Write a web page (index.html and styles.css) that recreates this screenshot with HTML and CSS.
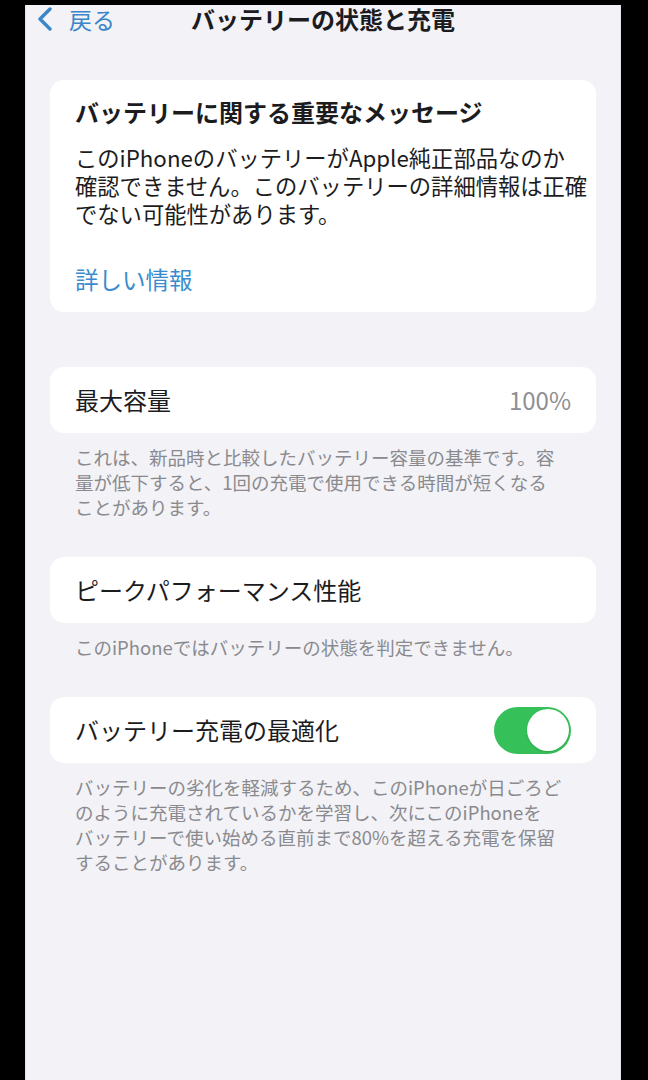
FILE: index.html
```html
<!DOCTYPE html>
<html lang="ja">
<head>
<meta charset="utf-8">
<title>バッテリーの状態と充電</title>
<link rel="stylesheet" href="styles.css">
</head>
<body>
<div class="screen">
  <header class="nav">
    <a class="back">
      <svg class="chev" width="14" height="24" viewBox="0 0 14 24"><polyline points="12,2 2,12 12,22" fill="none" stroke="#3a86c8" stroke-width="3.4" stroke-linecap="round" stroke-linejoin="round"/></svg>
      <span>戻る</span>
    </a>
    <h1 class="nav-title">バッテリーの状態と充電</h1>
    <span></span>
  </header>

  <main class="content">
    <section class="card notice">
      <h2 class="notice-title">バッテリーに関する重要なメッセージ</h2>
      <p class="notice-body"><span class="ln">このiPhoneのバッテリーがApple純正部品なのか</span><span class="ln">確認できません。このバッテリーの詳細情報は正確</span><span class="ln">でない可能性があります。</span></p>
      <a class="notice-link">詳しい情報</a>
    </section>

    <section class="card row first-row">
      <span class="label">最大容量</span>
      <span class="value">100%</span>
    </section>
    <p class="footer">これは、新品時と比較したバッテリー容量の基準です。容<br>量が低下すると、1回の充電で使用できる時間が短くなる<br>ことがあります。</p>

    <section class="card row">
      <span class="label">ピークパフォーマンス性能</span>
    </section>
    <p class="footer">このiPhoneではバッテリーの状態を判定できません。</p>

    <section class="card row">
      <span class="label">バッテリー充電の最適化</span>
      <span class="toggle"><span class="knob"></span></span>
    </section>
    <p class="footer">バッテリーの劣化を軽減するため、このiPhoneが日ごろど<br>のように充電されているかを学習し、次にこのiPhoneを<br>バッテリーで使い始める直前まで80%を超える充電を保留<br>することがあります。</p>
  </main>
</div>
</body>
</html>
```

FILE: styles.css
```css
html, body {
  margin: 0;
  padding: 0;
  background: #000;
}

body {
  font-family: "Noto Sans CJK JP", "Noto Sans", "Liberation Sans", sans-serif;
  color: #1c1c1e;
}

.screen {
  margin: 5px 0 0 25px;
  width: 596px;
  height: 1075px;
  background: #f2f2f7;
  box-sizing: border-box;
  border-left: 1px solid #e4e4ea;
  border-right: 1px solid #e4e4ea;
}

.nav {
  height: 28px;
  display: grid;
  grid-template-columns: 1fr auto 1fr;
  align-items: center;
}

.back {
  display: flex;
  align-items: center;
  gap: 17px;
  padding-left: 12px;
  color: #3a86c8;
  font-size: 23px;
  line-height: 28px;
}

.chev {
  display: block;
}

.nav-title {
  margin: 0;
  font-size: 24px;
  line-height: 28px;
  font-weight: 700;
  color: #1c1c1e;
}

.content {
  padding: 47px 24px 0 24px;
}

.card {
  background: #fff;
  border-radius: 14px;
}

.notice {
  padding: 17px 25px 18px;
}

.notice-title {
  margin: 0 0 16px;
  font-size: 24px;
  line-height: 30px;
  font-weight: 700;
}

.notice-body {
  margin: 0;
  font-size: 22.3px;
  line-height: 28px;
  white-space: nowrap;
}

.notice-body .ln {
  display: block;
  height: 28px;
}

.notice-link {
  display: block;
  margin-top: 37px;
  font-size: 23.5px;
  line-height: 30px;
  color: #3a8ccf;
}

.row {
  height: 66px;
  padding: 0 25px;
  display: flex;
  align-items: center;
  justify-content: space-between;
  margin-top: 37px;
}

.first-row {
  margin-top: 55px;
}

.label {
  font-size: 24px;
  line-height: 30px;
}

.value {
  font-size: 24px;
  line-height: 30px;
  color: #8e8e93;
}

.footer {
  margin: 12px 0 0;
  padding: 0 25px;
  font-size: 18.5px;
  line-height: 25px;
  color: #8a8a8e;
  white-space: nowrap;
}

.toggle {
  width: 77px;
  height: 47px;
  box-sizing: border-box;
  padding: 2.5px;
  border-radius: 24px;
  background: #36c05a;
  display: flex;
  justify-content: flex-end;
  align-items: center;
}

.knob {
  width: 42px;
  height: 42px;
  border-radius: 50%;
  background: #fff;
  box-shadow: 0 1px 2px rgba(0, 0, 0, 0.15);
}
```
